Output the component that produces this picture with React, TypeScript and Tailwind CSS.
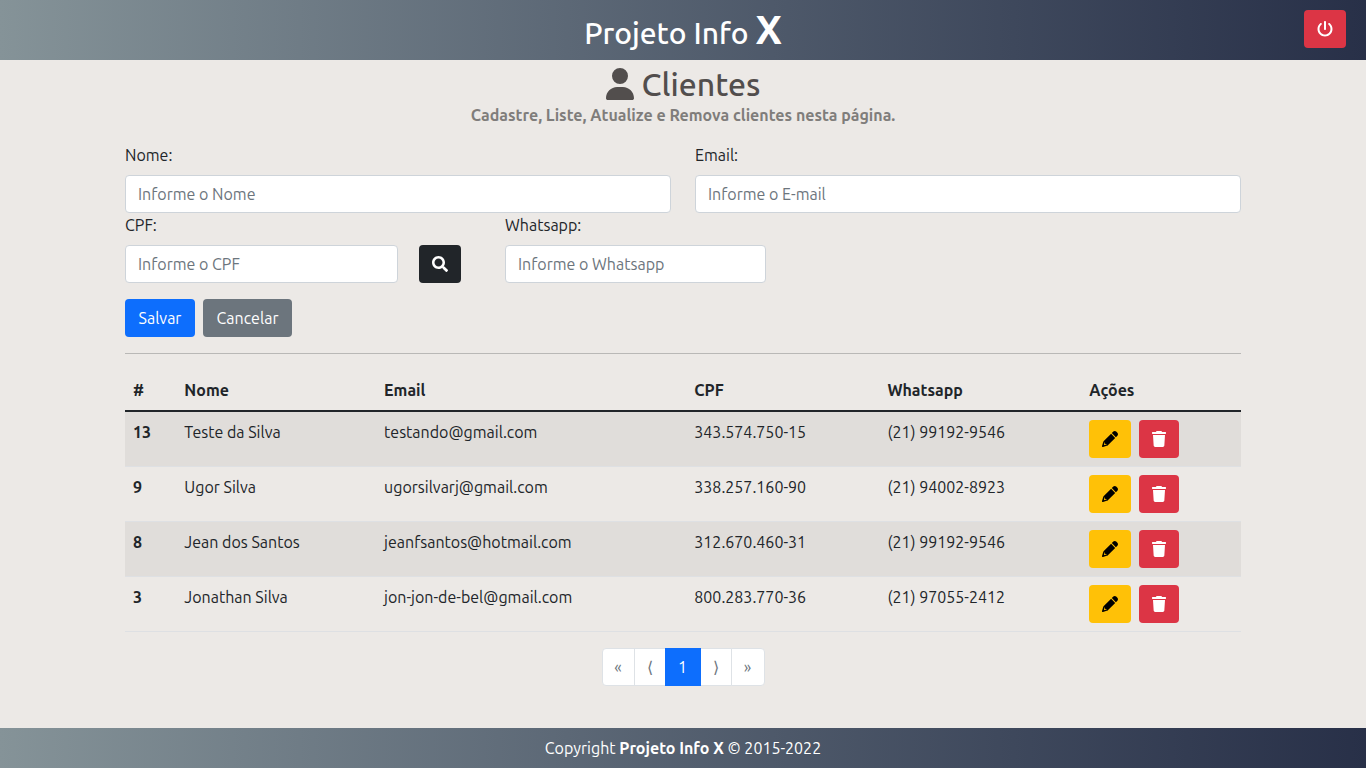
import React from "react";
import { FaSearch } from "react-icons/fa";
import { FaPowerOff, FaUser } from "react-icons/fa6";

type Client = { id: number; name: string; email: string; cpf: string; phone: string };

const clients: Client[] = [
  { id: 13, name: "Teste da Silva", email: "testando@gmail.com", cpf: "343.574.750-15", phone: "(21) 99192-9546" },
  { id: 9, name: "Ugor Silva", email: "ugorsilvarj@gmail.com", cpf: "338.257.160-90", phone: "(21) 94002-8923" },
  { id: 8, name: "Jean dos Santos", email: "jeanfsantos@hotmail.com", cpf: "312.670.460-31", phone: "(21) 99192-9546" },
  { id: 3, name: "Jonathan Silva", email: "jon-jon-de-bel@gmail.com", cpf: "800.283.770-36", phone: "(21) 97055-2412" },
];

const inputClass =
  "block h-[38px] w-full min-w-0 rounded border border-[#ced4da] bg-white px-3 text-[#212529] placeholder:text-[#6c757d]";

function PencilIcon() {
  return (
    <svg viewBox="0 0 512 512" className="size-4" fill="currentColor" aria-hidden="true">
      <path d="M421.7 220.3L188.5 453.4L154.6 419.5L158.1 416H112C103.2 416 96 408.8 96 400V353.9L92.51 357.4C87.78 362.2 84.31 368 82.42 374.4L59.44 452.6L137.6 429.6C143.1 427.7 149.8 424.2 154.6 419.5L188.5 453.4C178.1 463.8 165.2 471.5 151.1 475.6L30.77 511C22.35 513.5 13.24 511.2 7.03 504.1C.82 498.8-1.5 489.7 .98 481.2L36.37 360.9C40.53 346.8 48.16 333.9 58.57 323.5L291.7 90.34L421.7 220.3zM492.7 58.75C517.7 83.74 517.7 124.3 492.7 149.3L444.3 197.7L314.3 67.72L362.7 19.32C387.7-5.68 428.3-5.68 453.3 19.32L492.7 58.75z" />
    </svg>
  );
}

function TrashIcon() {
  return (
    <svg viewBox="0 0 448 512" className="h-4 w-3.5" fill="currentColor" aria-hidden="true">
      <path d="M53.21 467c1.562 24.84 23.02 45 47.9 45h245.8c24.88 0 46.33-20.16 47.9-45L416 128H32L53.21 467zM432 32H320l-11.58-23.16c-2.709-5.42-8.25-8.844-14.31-8.844H153.9c-6.061 0-11.6 3.424-14.31 8.844L128 32H16c-8.836 0-16 7.162-16 16V80c0 8.836 7.164 16 16 16h416c8.838 0 16-7.164 16-16V48C448 39.16 440.8 32 432 32z" />
    </svg>
  );
}

function Field({ id, label, placeholder, className, children }: {
  id: string;
  label: string;
  placeholder: string;
  className: string;
  children?: React.ReactNode;
}) {
  return (
    <div className={className}>
      <label htmlFor={id} className="mb-2 block">{label}</label>
      {children ?? <input id={id} type="text" placeholder={placeholder} className={inputClass} />}
    </div>
  );
}

function ClientForm() {
  return (
    <form className="border-b border-[#b9b8b6] pb-4" onSubmit={(e) => e.preventDefault()}>
      <div className="grid grid-cols-12 gap-x-6">
        <Field id="name" label="Nome:" placeholder="Informe o Nome" className="col-span-6" />
        <Field id="email" label="Email:" placeholder="Informe o E-mail" className="col-span-6" />
        <Field id="cpf" label="CPF:" placeholder="Informe o CPF" className="col-span-4">
          <div className="flex gap-[21px] pr-5">
            <input id="cpf" type="text" placeholder="Informe o CPF" className={inputClass} />
            <button type="button" aria-label="Buscar" className="flex h-[38px] w-[42px] shrink-0 items-center justify-center rounded bg-[#212529] text-white">
              <FaSearch />
            </button>
          </div>
        </Field>
        <Field id="phone" label="Whatsapp:" placeholder="Informe o Whatsapp" className="col-span-3" />
      </div>
      <div className="mt-4 flex gap-2">
        <button type="submit" className="h-[38px] w-[70px] rounded bg-[#0d6efd] text-white">Salvar</button>
        <button type="button" className="h-[38px] w-[89px] rounded bg-[#6c757d] text-white">Cancelar</button>
      </div>
    </form>
  );
}

function ClientTable() {
  return (
    <table className="mt-4 w-full table-fixed border-collapse text-left">
      <colgroup>
        <col className="w-[4.6%]" />
        <col className="w-[17.9%]" />
        <col className="w-[27.8%]" />
        <col className="w-[17.3%]" />
        <col className="w-[18.1%]" />
        <col />
      </colgroup>
      <thead>
        <tr className="border-b-2 border-[#212529]">
          {["#", "Nome", "Email", "CPF", "Whatsapp", "Ações"].map((title) => (
            <th key={title} scope="col" className="p-2 font-bold">{title}</th>
          ))}
        </tr>
      </thead>
      <tbody>
        {clients.map((c) => (
          <tr key={c.id} className="border-b border-[#dee0e3] align-top odd:bg-[#e0ddda]">
            <th scope="row" className="p-2 font-bold">{c.id}</th>
            <td className="p-2">{c.name}</td>
            <td className="p-2">{c.email}</td>
            <td className="p-2">{c.cpf}</td>
            <td className="p-2">{c.phone}</td>
            <td className="p-2">
              <div className="flex gap-2">
                <button type="button" aria-label="Editar" className="flex h-[38px] w-[42px] items-center justify-center rounded bg-[#ffc107] text-black">
                  <PencilIcon />
                </button>
                <button type="button" aria-label="Excluir" className="flex h-[38px] w-10 items-center justify-center rounded bg-[#dc3545] text-white">
                  <TrashIcon />
                </button>
              </div>
            </td>
          </tr>
        ))}
      </tbody>
    </table>
  );
}

function Pager() {
  const side = "h-[38px] border border-[#dee2e6] bg-white text-[#6c757d]";
  return (
    <nav aria-label="Paginação" className="mt-4 flex justify-center">
      <button type="button" className={side + " w-[33px] rounded-l"}>«</button>
      <button type="button" className={side + " -ml-px w-8"}>⟨</button>
      <button type="button" aria-current="page" className="z-10 -ml-px h-[38px] w-9 bg-[#0d6efd] text-white">1</button>
      <button type="button" className={side + " -ml-px w-8"}>⟩</button>
      <button type="button" className={side + " -ml-px w-[34px] rounded-r"}>»</button>
    </nav>
  );
}

export default function App() {
  return (
    <div className="flex min-h-screen flex-col bg-[#ece9e6] font-['Ubuntu','Noto_Sans',sans-serif] text-base text-[#212529]">
      <header className="grid h-[60px] grid-cols-[1fr_auto_1fr] items-start bg-linear-to-r from-[#859398] to-[#283048] px-5 text-white">
        <h1 className="col-start-2 pt-1.5 text-[30px] leading-[54px] font-medium">
          Projeto Info <strong className="text-[40px] leading-none font-bold">X</strong>
        </h1>
        <button type="button" aria-label="Sair" className="mt-2.5 flex h-[38px] w-[42px] items-center justify-center justify-self-end rounded bg-[#dc3545]">
          <FaPowerOff />
        </button>
      </header>

      <main className="mx-auto w-full max-w-[1140px] grow px-3 pt-[5px]">
        <div className="mb-4 text-center">
          <h2 className="flex items-center justify-center gap-2 text-[32px] leading-[38px] font-medium text-[#524e4d]">
            <FaUser className="h-8 w-7" />
            Clientes
          </h2>
          <p className="font-bold text-[#7f7d7b]">Cadastre, Liste, Atualize e Remova clientes nesta página.</p>
        </div>
        <ClientForm />
        <ClientTable />
        <Pager />
      </main>

      <footer className="flex h-10 items-center justify-center bg-linear-to-r from-[#859398] to-[#283048] text-white">
        <p>Copyright <strong>Projeto Info X</strong> © 2015-2022</p>
      </footer>
    </div>
  );
}
